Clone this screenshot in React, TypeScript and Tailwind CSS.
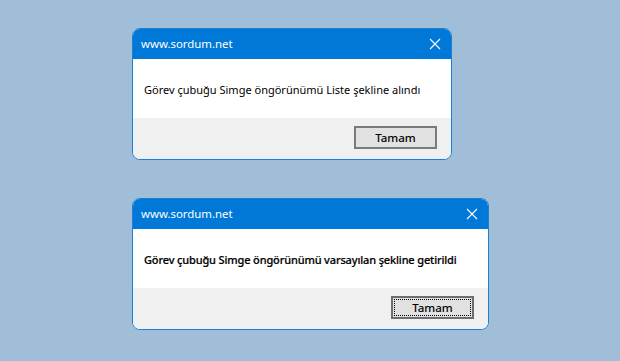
import React from "react";

function CloseIcon() {
  return (
    <svg width="12" height="12" viewBox="0 0 12 12" className="block">
      <path d="M1 1 L11 11 M11 1 L1 11" stroke="#ffffff" strokeWidth="1.1" fill="none" />
    </svg>
  );
}

function Dialog({
  width,
  message,
  focused,
}: {
  width: number;
  message: string;
  focused?: boolean;
}) {
  return (
    <div
      className="flex flex-col overflow-hidden rounded-[8px] border border-[#1a7fd6] bg-white"
      style={{ width }}
    >
      <div className="flex h-[30px] items-center justify-between bg-[#0078d7] pl-[8px] pr-[10px]">
        <span className="text-[11.4px] text-white">www.sordum.net</span>
        <CloseIcon />
      </div>
      <div className="flex h-[59px] items-center pl-[11px] pt-[3px]">
        <span
          className={
            focused
              ? "whitespace-nowrap text-[11px] font-medium tracking-[-0.15px] text-black [-webkit-text-stroke:0.2px_#000]"
              : "whitespace-nowrap text-[11px] text-black"
          }
        >
          {message}
        </span>
      </div>
      <div className="flex h-[41px] justify-end bg-[#f0f0f0] pr-[14px] pt-[8px]">
        <div
          className={
            focused
              ? "flex h-[23px] w-[83px] items-center justify-center border-2 border-[#6d6d6d] bg-[#e1e1e1] p-[1px]"
              : "flex h-[23px] w-[83px] items-center justify-center border-2 border-[#7a7a7a] bg-[#e1e1e1]"
          }
        >
          {focused ? (
            <div className="flex h-full w-full items-center justify-center border border-dotted border-black">
              <span className="text-[11.5px] font-medium text-black">Tamam</span>
            </div>
          ) : (
            <span className="text-[11.5px] font-medium text-black">Tamam</span>
          )}
        </div>
      </div>
    </div>
  );
}

export default function App() {
  return (
    <div
      className="flex h-[361px] w-[620px] flex-col items-start gap-[38px] bg-[#a1bed8] pl-[132px] pt-[28px]"
      style={{ fontFamily: '"Noto Sans", "Open Sans", sans-serif' }}
    >
      <Dialog width={320} message="Görev çubuğu Simge öngörünümü Liste şekline alındı" />
      <Dialog
        width={357}
        message="Görev çubuğu Simge öngörünümü varsayılan şekline getirildi"
        focused
      />
    </div>
  );
}
